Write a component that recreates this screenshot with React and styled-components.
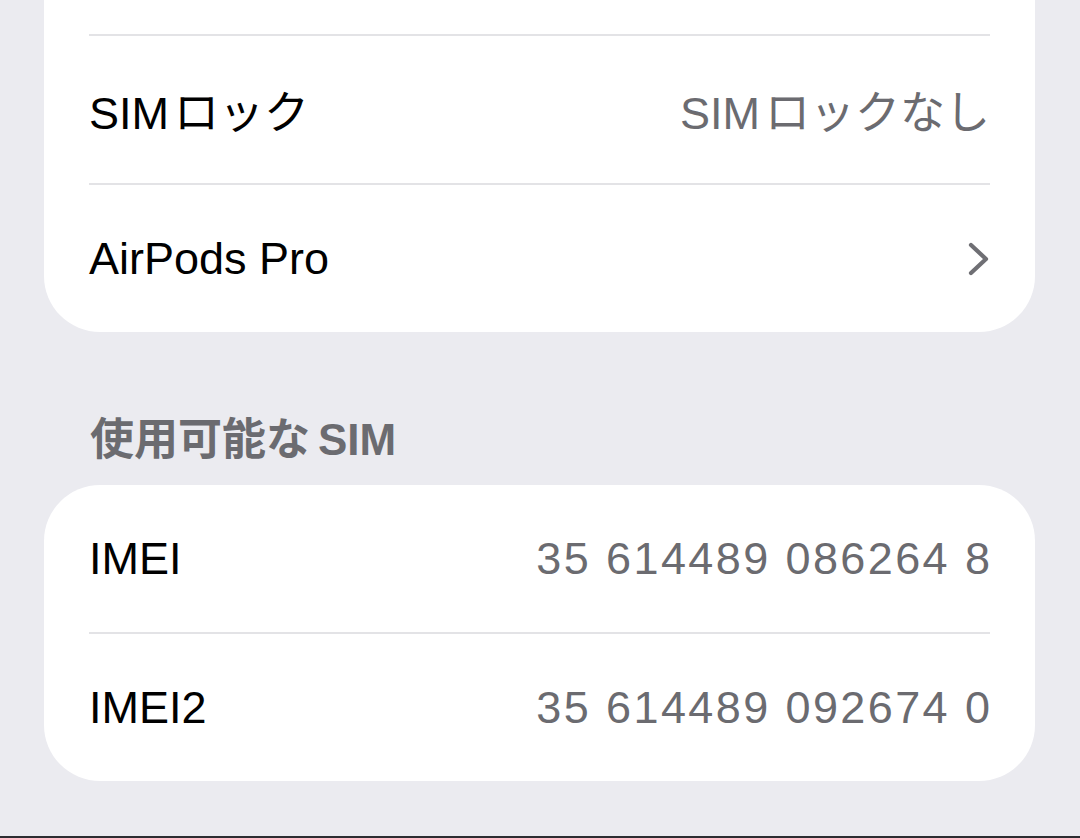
import React from "react";
import styled, { createGlobalStyle } from "styled-components";

const GlobalStyle = createGlobalStyle`
  html, body {
    margin: 0;
    padding: 0;
    background: #ebebf0;
  }
  body {
    font-family: "Liberation Sans", "Noto Sans CJK JP", sans-serif;
    -webkit-font-smoothing: antialiased;
  }
`;

const Screen = styled.div`
  width: 1080px;
  height: 838px;
  box-sizing: border-box;
  background: #ebebf0;
  overflow: hidden;
  display: flex;
  flex-direction: column;
  padding: 0 45px 0 44px;
  border-bottom: 2px solid #2c2c31;
`;

const Card = styled.div`
  background: #ffffff;
  border-radius: ${(p) => (p.$continued ? "0 0 56px 56px" : "56px")};
  padding: 0 45px;
  display: flex;
  flex-direction: column;
`;

const CardTail = styled.div`
  height: 34px;
`;

const Row = styled.div`
  height: 147px;
  display: flex;
  align-items: center;
  justify-content: space-between;
  border-top: ${(p) => (p.$first ? "none" : "2px solid #e3e3e6")};
  font-size: 45px;
  color: #000000;
`;

const Label = styled.span`
  white-space: nowrap;
`;

const Value = styled.span`
  color: #6b6b70;
  white-space: nowrap;
  letter-spacing: ${(p) => (p.$digits ? "2.4px" : "0")};
  margin-right: ${(p) => (p.$digits ? "-2.4px" : "0")};
`;

/* A Latin run next to kana gets a little breathing room, like iOS text */
const Latin = styled.span`
  margin-left: ${(p) => p.$before || 0}px;
  margin-right: ${(p) => p.$after || 0}px;
`;

const SectionHeader = styled.div`
  padding: 81px 0 19px 46px;
  font-size: 44px;
  line-height: 53px;
  font-weight: 600;
  color: #6b6b70;
`;

const Chevron = () => (
  <svg width="22" height="34" viewBox="0 0 22 34" fill="none">
    <path
      d="M3 3 L18 17 L3 31"
      stroke="#6f6f74"
      strokeWidth="4.2"
      strokeLinecap="round"
      strokeLinejoin="round"
    />
  </svg>
);

export default function App() {
  return (
    <>
      <GlobalStyle />
      <Screen>
        <Card $continued>
          <CardTail />
          <Row>
            <Label>
              <Latin $after={5}>SIM</Latin>ロック
            </Label>
            <Value>
              <Latin $after={5}>SIM</Latin>ロックなし
            </Value>
          </Row>
          <Row>
            <Label>AirPods Pro</Label>
            <Chevron />
          </Row>
        </Card>

        <SectionHeader>
          使用可能な<Latin $before={8}>SIM</Latin>
        </SectionHeader>

        <Card>
          <Row $first>
            <Label>IMEI</Label>
            <Value $digits>35 614489 086264 8</Value>
          </Row>
          <Row>
            <Label>IMEI2</Label>
            <Value $digits>35 614489 092674 0</Value>
          </Row>
        </Card>
      </Screen>
    </>
  );
}
